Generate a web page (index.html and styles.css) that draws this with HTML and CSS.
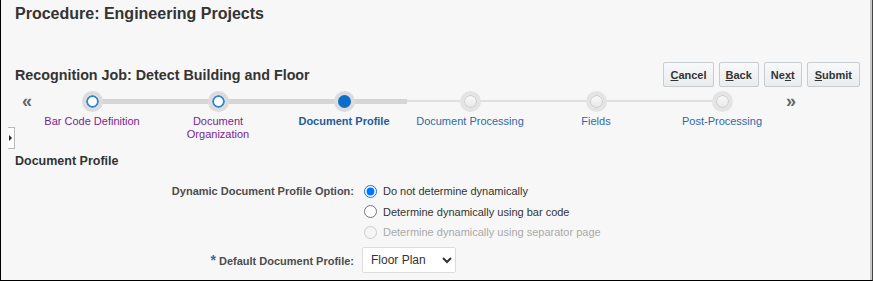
FILE: index.html
```html
<!DOCTYPE html>
<html lang="en">
<head>
  <meta charset="UTF-8">
  <title>Procedure: Engineering Projects</title>
  <link rel="stylesheet" href="styles.css">
</head>
<body>
  <div class="frame">
    <h1 class="page-title">Procedure: Engineering Projects</h1>

    <div class="job-bar">
      <h2 class="job-title">Recognition Job: Detect Building and Floor</h2>
      <div class="actions">
        <button class="btn"><u>C</u>ancel</button>
        <button class="btn"><u>B</u>ack</button>
        <button class="btn">Ne<u>x</u>t</button>
        <button class="btn"><u>S</u>ubmit</button>
      </div>
    </div>

    <div class="train">
      <span class="train-nav">&laquo;</span>
      <ol class="steps">
        <li class="step visited first"><span class="dot"></span><span class="step-label">Bar Code Definition</span></li>
        <li class="step visited"><span class="dot"></span><span class="step-label">Document<br>Organization</span></li>
        <li class="step current"><span class="dot"></span><span class="step-label">Document Profile</span></li>
        <li class="step todo"><span class="dot"></span><span class="step-label">Document Processing</span></li>
        <li class="step todo"><span class="dot"></span><span class="step-label">Fields</span></li>
        <li class="step todo last"><span class="dot"></span><span class="step-label">Post-Processing</span></li>
      </ol>
      <span class="train-nav">&raquo;</span>
      <span class="splitter"></span>
    </div>

    <h3 class="section-title">Document Profile</h3>

    <div class="form">
      <div class="form-label">Dynamic Document Profile Option:</div>
      <div class="options">
        <label class="opt"><input type="radio" name="dyn" checked> Do not determine dynamically</label>
        <label class="opt"><input type="radio" name="dyn"> Determine dynamically using bar code</label>
        <label class="opt disabled"><input type="radio" name="dyn" disabled> Determine dynamically using separator page</label>
      </div>
      <div class="form-label select-label"><span class="req">*</span> Default Document Profile:</div>
      <div class="select-wrap">
        <select class="select">
          <option>Floor Plan</option>
        </select>
      </div>
    </div>
  </div>
</body>
</html>
```

FILE: styles.css
```css
body {
  margin: 0;
  font-family: "Liberation Sans", Arial, sans-serif;
  color: #333;
  background: #fff;
}
.frame {
  position: relative;
  width: 873px;
  height: 281px;
  box-sizing: border-box;
  border-left: 1px solid #000;
  border-bottom: 1px solid #000;
  border-right: 1px solid #444;
  box-shadow: inset -2px 0 0 #c8c8c8;
  background: #f7f7f7;
  overflow: hidden;
}
.page-title {
  margin: 0;
  padding: 4px 0 0 14px;
  font-size: 16px;
  line-height: 20px;
  font-weight: bold;
  color: #333;
}
.job-bar {
  display: flex;
  align-items: center;
  justify-content: space-between;
  margin-top: 38px;
  padding: 0 12px 0 14px;
}
.job-title {
  margin: 0;
  font-size: 14.3px;
  font-weight: bold;
  color: #333;
}
.actions {
  display: flex;
  gap: 5px;
}
.btn {
  height: 25px;
  padding: 0 6px;
  font-family: inherit;
  font-size: 11px;
  font-weight: bold;
  color: #333;
  background: linear-gradient(#f8f9fa, #e9ebed);
  border: 1px solid #c7ccd1;
  border-radius: 2px;
}
.btn:last-child { padding: 0 7px; }

/* train */
.train {
  position: relative;
  display: flex;
  align-items: flex-start;
  margin-top: 4px;
  padding-left: 20px;
}
.train-nav {
  width: 8px;
  font-size: 18px;
  line-height: 20px;
  font-weight: bold;
  color: #666;
  margin-left: 1px;
  margin-right: -1px;
}
.steps {
  display: flex;
  margin: 0;
  padding: 0;
  list-style: none;
}
.step {
  position: relative;
  width: 126px;
  display: flex;
  flex-direction: column;
  align-items: center;
}
.step::before,
.step::after {
  content: "";
  position: absolute;
  top: 8px;
  height: 5px;
  width: 63px;
  background: #d6d6d6;
}
.step::before { left: 0; }
.step::after { right: 0; }
.step.todo::before,
.step.todo::after {
  top: 9px;
  height: 2px;
  background: #e0e0e0;
}
.step.first::before,
.step.last::after { display: none; }
.dot {
  position: relative;
  z-index: 1;
  width: 13px;
  height: 13px;
  border-radius: 50%;
  border: 4px solid #dcdcdc;
  box-sizing: content-box;
  background: #fff;
  box-shadow: inset 0 0 0 2px #2f86d4;
}
.step.current .dot {
  background: #0a6fcc;
  box-shadow: none;
}
.step.todo .dot {
  background: linear-gradient(#fbfbfb, #e6e6e6);
  box-shadow: inset 0 0 0 1px #c9c9c9;
  border-color: #e4e4e4;
}
.step-label {
  margin-top: 3px;
  font-size: 11px;
  line-height: 13px;
  text-align: center;
  color: #2f6aa8;
}
.step.visited .step-label { color: #7a1f90; }
.step.current .step-label {
  color: #245c9e;
  font-weight: bold;
}
.splitter {
  position: absolute;
  left: 7px;
  top: 36px;
  width: 6px;
  height: 20px;
  background: #fff;
  border: 1px solid #bbb;
  border-left: none;
}
.splitter::after {
  content: "";
  position: absolute;
  left: 1px;
  top: 7px;
  border-left: 3px solid #222;
  border-top: 3px solid transparent;
  border-bottom: 3px solid transparent;
}

.section-title {
  margin: 12px 0 0 14px;
  font-size: 12.5px;
  line-height: 16px;
  font-weight: bold;
  color: #333;
}

/* form */
.form {
  display: grid;
  grid-template-columns: 353px auto;
  column-gap: 8px;
  margin-top: 12px;
  font-size: 11px;
}
.form-label {
  text-align: right;
  font-weight: bold;
  color: #4d4d4d;
  line-height: 20px;
}
.options {
  display: flex;
  flex-direction: column;
}
.opt {
  display: flex;
  align-items: center;
  height: 20.5px;
  color: #333;
}
.opt input {
  margin: 0 6px 0 2px;
  width: 13px;
  height: 13px;
}
.opt.disabled { color: #aaa; }
.select-label {
  margin-top: 4px;
  line-height: 26px;
}
.req { color: #2f6aa8; font-size: 14px; }
.select-wrap {
  margin-top: 4px;
}
.select {
  width: 94px;
  height: 26px;
  font-family: inherit;
  font-size: 12px;
  color: #333;
  background: #fff;
  border: 1px solid #dcdcdc;
  border-radius: 2px;
  padding: 0 4px;
}
```
